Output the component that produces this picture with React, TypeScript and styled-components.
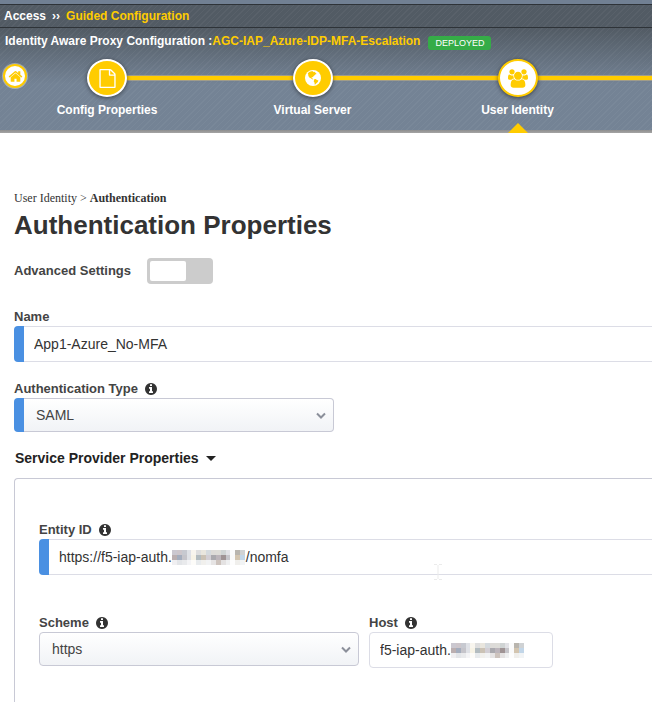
import React from "react";
import styled, { createGlobalStyle, css } from "styled-components";

const YELLOW = "#ffcc00";
const BLUE = "#4a90e2";

const GlobalStyle = createGlobalStyle`
  *, *::before, *::after { box-sizing: border-box; }
  body {
    margin: 0;
    background: #fff;
    color: #333;
    font-family: "Liberation Sans", Arial, sans-serif;
    font-size: 14px;
    overflow-x: hidden;
  }
`;

/* ---------- header ---------- */

const Header = styled.header`
  color: #fff;
  font-size: 12px;
  font-weight: bold;
  border-top: 4px solid #718093;
  background:
    linear-gradient(#8e8e8e, #a4a4a4) bottom / 100% 3px no-repeat,
    repeating-linear-gradient(135deg, rgba(255, 255, 255, 0.04) 0 1px, transparent 1px 4px),
    linear-gradient(#525b64 24px, #748395 80px);
`;

const Crumbs = styled.nav`
  display: flex;
  align-items: center;
  gap: 6px;
  height: 24px;
  padding: 0 4px;
  border-top: 1px solid #2e3338;
  border-bottom: 1px solid #2e3338;

  a { color: #fff; text-decoration: none; }
  a[aria-current] { color: ${YELLOW}; }
`;

const ConfigLine = styled.div`
  display: flex;
  align-items: center;
  height: 26px;
  padding-left: 5px;
  white-space: nowrap;
`;

const ConfigName = styled.span`
  color: ${YELLOW};
`;

const Badge = styled.span`
  margin: 3px 0 0 8px;
  padding: 0 7px;
  border-radius: 3px;
  background: #35ac47;
  font-size: 9px;
  line-height: 14px;
  font-weight: normal;
`;

const Wizard = styled.nav`
  display: flex;
  height: 79px;
  padding-top: 5px;
  overflow: hidden;
`;

const HomeLink = styled.a`
  display: flex;
  flex: none;
  align-items: center;
  justify-content: center;
  width: 24px;
  height: 24px;
  margin: 5px 1px 0 3px;
  border: 2px solid ${YELLOW};
  border-radius: 50%;
  background: #fff;
  box-shadow: 0 0 0 1px rgba(255, 255, 255, 0.35);
`;

const Steps = styled.ol`
  display: flex;
  flex: 1;
  margin: 0;
  padding: 0;
  list-style: none;
`;

const line = css`
  content: "";
  position: absolute;
  top: 16px;
  right: 0;
  height: 6px;
  border: solid #a09c8a;
  border-width: 1px 0;
  background: ${YELLOW};
`;

const Step = styled.li<{ $first?: boolean }>`
  position: relative;
  display: flex;
  flex: none;
  width: ${(p) => (p.$first ? 182 : 205)}px;
  padding-right: ${(p) => (p.$first ? 24 : 0)}px;
  &::before {
    ${line}
    left: ${(p) => (p.$first ? "50%" : "0")};
  }
`;

const StepTail = styled.li`
  position: relative;
  flex: 1;
  &::before { ${line} left: 0; }
`;

const StepButton = styled.button`
  position: relative;
  display: flex;
  flex: 1;
  flex-direction: column;
  align-items: center;
  justify-content: flex-start;
  padding: 0;
  border: 0;
  background: none;
  color: #fff;
  font: inherit;
  line-height: 14px;
  cursor: pointer;
`;

const StepDisc = styled.span<{ $active?: boolean }>`
  display: flex;
  flex: none;
  align-items: center;
  justify-content: center;
  width: 40px;
  height: 38px;
  margin-bottom: 6px;
  border: 2px solid ${(p) => (p.$active ? YELLOW : "#fff")};
  border-radius: 50%;
  background: ${(p) => (p.$active ? "#fff" : YELLOW)};
  color: ${(p) => (p.$active ? YELLOW : "#fff")};
  box-shadow: 0 1px 4px rgba(0, 0, 0, 0.5);
`;

const ActiveArrow = styled.span`
  flex: none;
  width: 0;
  margin-top: 6px;
  border: 10px solid transparent;
  border-top-width: 0;
  border-bottom-color: ${YELLOW};
`;

/* ---------- form ---------- */

const Main = styled.main`
  padding: 57px 0 0 14px;
`;

const Path = styled.div`
  font-family: "Liberation Serif", "Times New Roman", serif;
  font-size: 12px;
  line-height: 16px;
`;

const Title = styled.h1`
  margin: 3px 0 0;
  font-size: 26px;
  line-height: 32px;
`;

const SettingRow = styled.div`
  display: flex;
  align-items: center;
  gap: 16px;
  height: 26px;
  margin-top: 17px;
`;

const Label = styled.label`
  color: #444;
  font-size: 13px;
  font-weight: bold;
  line-height: 18px;
`;

const Switch = styled.input`
  appearance: none;
  display: flex;
  width: 66px;
  height: 26px;
  margin: 0;
  padding: 3px;
  border-radius: 4px;
  background: #ccc;
  cursor: pointer;
  &::before {
    content: "";
    width: 36px;
    border-radius: 2px;
    background: #fff;
  }
  &:checked { justify-content: flex-end; background: ${BLUE}; }
`;

const Field = styled.div<{ $gap?: number }>`
  margin-top: ${(p) => p.$gap ?? 0}px;
`;

const LabelRow = styled.div`
  display: flex;
  align-items: center;
  gap: 7px;
  height: 20px;
  padding-top: 2px;
`;

const frame = css<{ $required?: boolean }>`
  position: relative;
  display: flex;
  &::before {
    content: "";
    flex: none;
    width: ${(p) => (p.$required ? 10 : 0)}px;
    border-radius: 4px 0 0 4px;
    background: ${BLUE};
  }
`;

const TextFrame = styled.div<{ $required?: boolean }>`
  ${frame}
`;

const TextInput = styled.input<{ $required?: boolean; $bleed?: boolean }>`
  flex: 1;
  min-width: 0;
  height: 36px;
  padding: 0 10px;
  border: 1px solid #dcdde6;
  border-left-width: ${(p) => (p.$required ? 0 : 1)}px;
  border-right-width: ${(p) => (p.$bleed ? 0 : 1)}px;
  border-radius: ${(p) => (p.$required ? 0 : 4)}px;
  background: #fff;
  color: #333;
  font: 14px "Liberation Sans", Arial, sans-serif;
`;

const SelectFrame = styled.div<{ $required?: boolean }>`
  ${frame}
  width: 320px;
`;

const Select = styled.select<{ $required?: boolean }>`
  appearance: none;
  flex: 1;
  height: 34px;
  padding: 0 30px 0 12px;
  border: 1px solid #c8c9d5;
  border-left-width: ${(p) => (p.$required ? 0 : 1)}px;
  border-radius: ${(p) => (p.$required ? "0 4px 4px 0" : "4px")};
  background: linear-gradient(#fff, #f1f3f6);
  color: #444;
  font: 14px "Liberation Sans", Arial, sans-serif;
`;

const Chevron = styled.svg`
  position: absolute;
  top: 13px;
  right: 7px;
  pointer-events: none;
`;

const Redaction = styled.svg<{ $left: number }>`
  position: absolute;
  top: 11px;
  left: ${(p) => p.$left}px;
  pointer-events: none;
`;

const Caret = styled.svg`
  position: absolute;
  top: 25px;
  left: 395px;
  pointer-events: none;
`;

const SectionToggle = styled.button`
  display: flex;
  align-items: center;
  gap: 7px;
  height: 20px;
  margin: 16px 0 10px;
  padding: 0 1px;
  border: 0;
  background: none;
  color: #222;
  font: bold 14px "Liberation Sans", Arial, sans-serif;
  cursor: pointer;
  &::after {
    content: "";
    border: 5px solid transparent;
    border-top-color: currentColor;
    border-bottom-width: 0;
  }
`;

const Panel = styled.section`
  padding: 40px 0 40px 24px;
  border: 1px solid #c8c9d5;
  border-right: 0;
  border-bottom: 0;
  border-top-left-radius: 4px;
`;

const FieldRow = styled.div`
  display: flex;
  gap: 10px;
  margin-top: 37px;
`;

const HostFrame = styled(TextFrame)`
  width: 184px;
`;

/* ---------- drawings ---------- */

const HomeIcon = () => (
  <svg width="15" height="15" viewBox="0 0 1792 1792" fill={YELLOW} aria-hidden="true">
    <path d="M1472 992v480q0 26-19 45t-45 19h-384v-384h-256v384h-384q-26 0-45-19t-19-45v-480q0-1 .5-3t.5-3l575-474 575 474q1 2 1 6zm223-69l-62 74q-8 9-21 11h-3q-13 0-21-7l-692-577-692 577q-12 8-24 7-13-2-21-11l-62-74q-8-10-7-23.5t11-21.5l719-599q32-26 76-26t76 26l244 204v-195q0-14 9-23t23-9h192q14 0 23 9t9 23v408l219 182q10 8 11 21.5t-7 23.5z" />
  </svg>
);

const FileIcon = () => (
  <svg width="19" height="19" viewBox="0 0 1792 1792" fill="currentColor" aria-hidden="true">
    <path d="M1596 380q28 28 48 76t20 88v1152q0 40-28 68t-68 28h-1344q-40 0-68-28t-28-68v-1600q0-40 28-68t68-28h896q40 0 88 20t76 48zm-444-244v376h376q-10-29-22-41l-313-313q-12-12-41-22zm384 1528v-1024h-416q-40 0-68-28t-28-68v-416h-768v1536h1280z" />
  </svg>
);

const GlobeIcon = () => (
  <svg width="16" height="16" viewBox="0 0 16 16" aria-hidden="true">
    <circle cx="8" cy="8" r="8" fill="currentColor" />
    <path
      fill={YELLOW}
      d="M2.8 3.2 4.6 1.7 6.6 1.3 8.3 1.2 8 2.2 9.4 1.8 10.6 2.7 11.6 4 10.2 4.6 9.4 5.6 8.4 6.2 8 7.2 6.9 7 6.6 8 7.6 8.6 8.4 9.4 7.2 9.3 5.8 8.3 4.3 7.4 3.4 6 3.2 4.5zM9.2 9.2 10.6 9 12 9.9 13.4 10.6 12.8 12 11.4 13.2 10.2 14.4 9.6 14.6 9.6 12.8 8.7 11.4z"
    />
  </svg>
);

const UsersIcon = () => (
  <svg width="20" height="19" viewBox="0 0 1920 1792" fill="currentColor" aria-hidden="true">
    <path d="M593 896q-162 5-265 128h-134q-82 0-138-40.5t-56-118.5q0-353 124-353 6 0 43.5 21t97.5 42.5 119 21.5q67 0 133-23-5 37-5 66 0 139 81 256zm1071 637q0 120-73 189.5t-194 69.5h-874q-121 0-194-69.5t-73-189.5q0-53 3.5-103.5t14-109 26.5-108.5 43-97.5 62-81 85.5-53.5 111.5-20q10 0 43 21.5t73 48 107 48 135 21.5 135-21.5 107-48 73-48 43-21.5q61 0 111.5 20t85.5 53.5 62 81 43 97.5 26.5 108.5 14 109 3.5 103.5zm-1024-1277q0 106-75 181t-181 75-181-75-75-181 75-181 181-75 181 75 75 181zm704 384q0 159-112.5 271.5t-271.5 112.5-271.5-112.5-112.5-271.5 112.5-271.5 271.5-112.5 271.5 112.5 112.5 271.5zm576 225q0 78-56 118.5t-138 40.5h-134q-103-123-265-128 81-117 81-256 0-29-5-66 66 23 133 23 59 0 119-21.5t97.5-42.5 43.5-21q124 0 124 353zm-128-609q0 106-75 181t-181 75-181-75-75-181 75-181 181-75 181 75 75 181z" />
  </svg>
);

const InfoIcon = () => (
  <svg width="12" height="12" viewBox="128 128 1536 1536" fill="#333" role="img" aria-label="Info">
    <path d="M1152 1376v-160q0-14-9-23t-23-9h-96v-512q0-14-9-23t-23-9h-320q-14 0-23 9t-9 23v160q0 14 9 23t23 9h96v320h-96q-14 0-23 9t-9 23v160q0 14 9 23t23 9h448q14 0 23-9t9-23zm-128-896v-160q0-14-9-23t-23-9h-192q-14 0-23 9t-9 23v160q0 14 9 23t23 9h192q14 0 23-9t9-23zm640 416q0 209-103 385.5t-279.5 279.5-385.5 103-385.5-103-279.5-279.5-103-385.5 103-385.5 279.5-279.5 385.5-103 385.5 103 279.5 279.5 103 385.5z" />
  </svg>
);

const SelectChevron = () => (
  <Chevron width="12" height="9" viewBox="0 0 12 9" fill="none" aria-hidden="true">
    <path d="M2 2.5 6 6.5 10 2.5" stroke="#8b8f9a" strokeWidth="2" />
  </Chevron>
);

const TextCaret = () => (
  <Caret width="8" height="16" viewBox="0 0 8 16" fill="none" aria-hidden="true">
    <path d="M0 .5H3M5 .5H8M4 1V15M0 15.5H3M5 15.5H8" stroke="#ebebeb" />
  </Caret>
);

const MOSAIC = [
  ["#cbc8d0", "#cdc6cb", "#c7c9d0", "#dfe1e6", "#f8f5ee", "#dedede", "#e9e6de", "#d5dade", "#dddbd8", "#dddcd8", "#d0d4d4", "#e2e2e6", "#fbfbfb", "#b9b5ae", "#cfd2d4"],
  ["#bbafb0", "#a4adbd", "#c5c4ca", "#dfe1e6", "#f7f3e6", "#b3bcc0", "#cbc2b5", "#d3cfd5", "#aaa9ae", "#bcb5bb", "#9f9394", "#c6c5ca", "#fafafa", "#d3c5b0", "#c2d6e8"],
  ["#f0eff1", "#e3e5e8", "#e9eaec", "#f4f4f6", "#fdfcf9", "#e8ebed", "#f1f0ed", "#f2f3f4", "#e6e4e4", "#cdc3bd", "#e4e2e2", "#eff0f1", "#fdfdfd", "#f0efec", "#f2f4f5"],
];

const Mosaic = ({ left }: { left: number }) => (
  <Redaction $left={left} width="73" height="15" viewBox="0 0 75 15" preserveAspectRatio="none" shapeRendering="crispEdges" aria-hidden="true">
    {MOSAIC.map((row, y) =>
      row.map((fill, x) => <rect key={`${x}-${y}`} x={x * 5} y={y * 5} width="5" height="5" fill={fill} />)
    )}
  </Redaction>
);

const HIDDEN = "\u00a0".repeat(19);

export default function App() {
  return (
    <>
      <GlobalStyle />
      <Header>
        <Crumbs aria-label="Breadcrumb">
          <a href="#access">Access</a>
          <span>››</span>
          <a href="#guided" aria-current="page">Guided Configuration</a>
        </Crumbs>
        <ConfigLine>
          <span>Identity Aware Proxy Configuration :</span>
          <ConfigName>AGC-IAP_Azure-IDP-MFA-Escalation</ConfigName>
          <Badge>DEPLOYED</Badge>
        </ConfigLine>
        <Wizard aria-label="Configuration steps">
          <HomeLink href="#home" aria-label="Home"><HomeIcon /></HomeLink>
          <Steps>
            <Step $first>
              <StepButton type="button">
                <StepDisc><FileIcon /></StepDisc>
                Config Properties
              </StepButton>
            </Step>
            <Step>
              <StepButton type="button">
                <StepDisc><GlobeIcon /></StepDisc>
                Virtual Server
              </StepButton>
            </Step>
            <Step>
              <StepButton type="button" aria-current="step">
                <StepDisc $active><UsersIcon /></StepDisc>
                User Identity
                <ActiveArrow />
              </StepButton>
            </Step>
            <StepTail aria-hidden="true" />
          </Steps>
        </Wizard>
      </Header>

      <Main>
        <Path>User Identity &gt; <b>Authentication</b></Path>
        <Title>Authentication Properties</Title>

        <SettingRow>
          <Label htmlFor="advanced">Advanced Settings</Label>
          <Switch id="advanced" type="checkbox" role="switch" />
        </SettingRow>

        <Field $gap={22}>
          <LabelRow><Label htmlFor="name">Name</Label></LabelRow>
          <TextFrame $required>
            <TextInput id="name" $required $bleed defaultValue="App1-Azure_No-MFA" />
          </TextFrame>
        </Field>

        <Field $gap={16}>
          <LabelRow><Label htmlFor="type">Authentication Type</Label><InfoIcon /></LabelRow>
          <SelectFrame $required>
            <Select id="type" $required defaultValue="SAML"><option>SAML</option></Select>
            <SelectChevron />
          </SelectFrame>
        </Field>

        <SectionToggle type="button" aria-expanded="true">Service Provider Properties</SectionToggle>

        <Panel>
          <Field>
            <LabelRow><Label htmlFor="entity">Entity ID</Label><InfoIcon /></LabelRow>
            <TextFrame $required>
              <TextInput id="entity" $required $bleed defaultValue={`https://f5-iap-auth.${HIDDEN}/nomfa`} />
              <Mosaic left={133} />
              <TextCaret />
            </TextFrame>
          </Field>

          <FieldRow>
            <Field>
              <LabelRow><Label htmlFor="scheme">Scheme</Label><InfoIcon /></LabelRow>
              <SelectFrame>
                <Select id="scheme" defaultValue="https"><option>https</option></Select>
                <SelectChevron />
              </SelectFrame>
            </Field>
            <Field>
              <LabelRow><Label htmlFor="host">Host</Label><InfoIcon /></LabelRow>
              <HostFrame>
                <TextInput id="host" defaultValue="f5-iap-auth." />
                <Mosaic left={82} />
              </HostFrame>
            </Field>
          </FieldRow>
        </Panel>
      </Main>
    </>
  );
}
